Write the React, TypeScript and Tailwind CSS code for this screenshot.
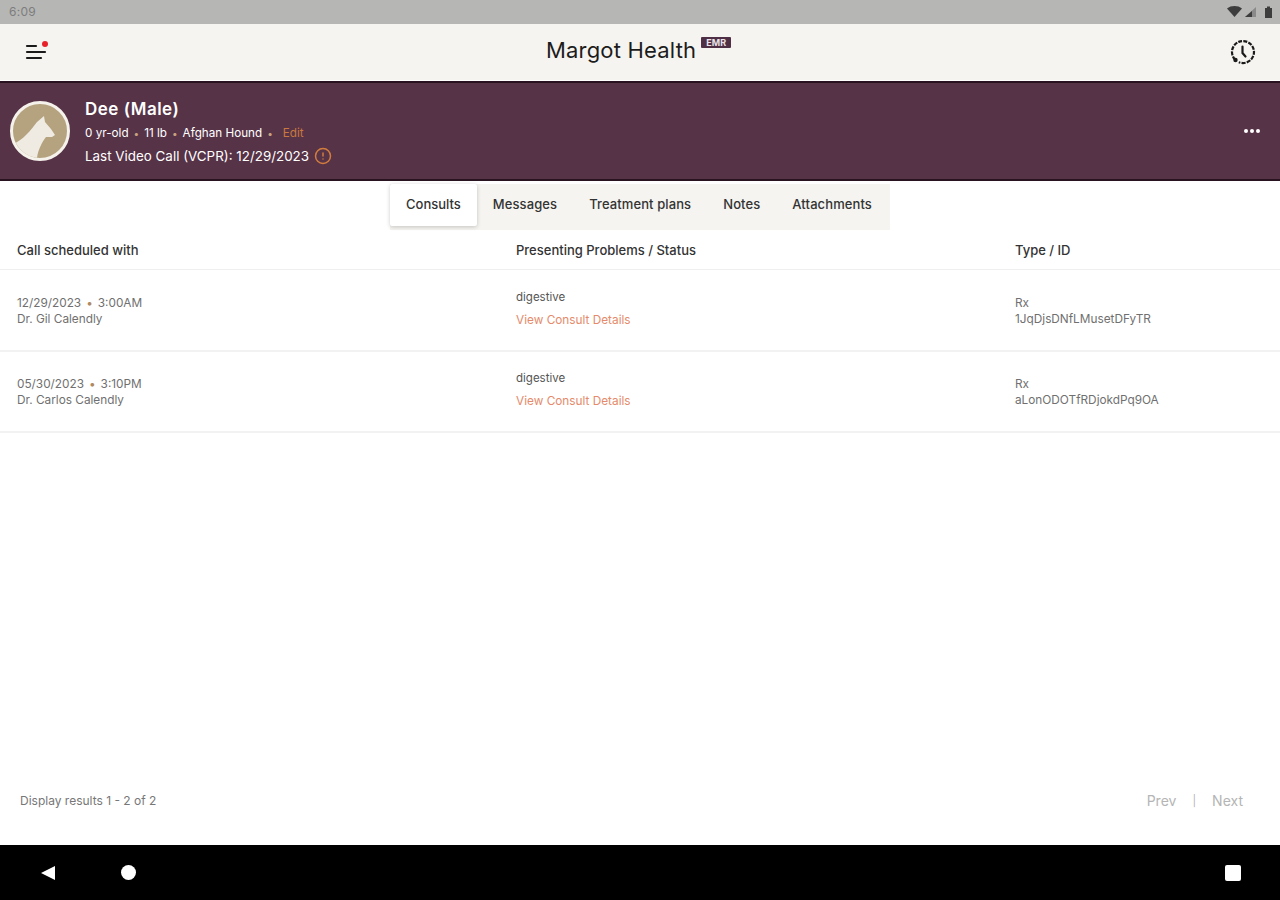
import React from 'react';
import { Info } from 'lucide-react';

const font = "font-['Inter','Liberation_Sans',sans-serif]";

const tabs = ['Consults', 'Messages', 'Treatment plans', 'Notes', 'Attachments'];

const consults = [
  { date: '12/29/2023', time: '3:00AM', doctor: 'Dr. Gil Calendly', id: '1JqDjsDNfLMusetDFyTR' },
  { date: '05/30/2023', time: '3:10PM', doctor: 'Dr. Carlos Calendly', id: 'aLonODOTfRDjokdPq9OA' },
];

const Dot = () => <span className="mx-[5px] text-[10px] leading-none text-[#c9a27e]">•</span>;

const StatusIcons = () => (
  <svg width="46" height="12" viewBox="0 0 46 12" fill="#3d3d3d">
    <path d="M0 2.5C4-.8 11-.8 15 2.5L7.5 11z" />
    <path d="M29 1v10H18z" fill="#8a8a8a" />
    <path d="M25 5v6h-7z" />
    <path d="M38 2h2V.5h3V2h2v10h-7z" />
  </svg>
);

const MenuIcon = () => (
  <div className="relative h-[20px] w-[24px]">
    <svg width="24" height="20" viewBox="0 0 24 20" fill="none" stroke="#1a1a1a" strokeWidth="2.2" strokeLinecap="round">
      <path d="M3 4h9" />
      <path d="M3 10h18" />
      <path d="M3 16h14" />
    </svg>
    <span className="absolute right-[0px] top-[-1px] h-[6px] w-[6px] rounded-full bg-[#e8202a]" />
  </div>
);

const HistoryIcon = () => (
  <svg width="26" height="26" viewBox="0 0 26 26" fill="none" stroke="#1a1a1a" strokeWidth="2.2">
    <path d="M5.2 20.8A11 11 0 1 1 8.8 23.2" strokeDasharray="4 1.2" />
    <path d="M12.5 7.5v6.5l3 3.5" strokeLinecap="round" />
    <circle cx="5.5" cy="21" r="2.2" fill="#1a1a1a" stroke="none" />
  </svg>
);

const DogAvatar = () => (
  <div className="h-[60px] w-[60px] shrink-0 overflow-hidden rounded-full border-[3px] border-[#f5f2ec] bg-[#b5a27f]">
    <svg width="54" height="54" viewBox="0 0 54 54">
      <path d="M0 40 C10 36 18 26 24 18 L31 12 L32 18 L38 25 L42 31 L39 33 L33 33 C29 38 25 46 24 54 L0 54 Z" fill="#efebe2" />
    </svg>
  </div>
);

export default function App() {
  return (
    <div className={`flex h-[900px] w-[1280px] flex-col overflow-hidden bg-white ${font}`}>
      {/* status bar */}
      <div className="flex h-[24px] items-center justify-between bg-[#b6b6b4] pl-[9px] pr-[7px]">
        <span className="text-[12px] tracking-[0.3px] text-[#7d7d7d]">6:09</span>
        <StatusIcons />
      </div>

      {/* app header */}
      <div className="flex h-[56px] items-center justify-between bg-[#f6f4f0] pl-[24px] pr-[24px]">
        <MenuIcon />
        <div className="-ml-[1px] -mt-[4px] flex items-start">
          <span className="text-[22px] leading-none tracking-[0.2px] text-[#1c1c1c]">Margot Health</span>
          <span className="ml-[5px] mt-[-2px] rounded-[1px] bg-[#4f2f46] px-[5px] text-[9px] font-bold leading-[11px] text-[#e9e2e6]">EMR</span>
        </div>
        <HistoryIcon />
      </div>

      {/* patient banner */}
      <div className="mt-[1px] flex h-[100px] items-center border-y-2 border-[#2a1320] bg-[#573347] pl-[10px] pr-[20px]">
        <DogAvatar />
        <div className="ml-[15px] flex flex-1 flex-col text-white">
          <span className="text-[17px] font-semibold leading-[22px] tracking-[0.5px]">Dee (Male)</span>
          <div className="mt-[5px] flex items-center text-[11.7px] leading-[16px]">
            <span>0 yr-old</span>
            <Dot />
            <span>11 lb</span>
            <Dot />
            <span>Afghan Hound</span>
            <Dot />
            <span className="ml-[5px] text-[#c9793f]">Edit</span>
          </div>
          <div className="mt-[6px] flex items-center text-[13.4px] leading-[18px]">
            <span>Last Video Call (VCPR): 12/29/2023</span>
            <Info size={18} className="ml-[5px] rotate-180 text-[#d27d3e]" />
          </div>
        </div>
        <div className="flex gap-[2px]">
          <span className="h-[4px] w-[4px] rounded-full bg-white" />
          <span className="h-[4px] w-[4px] rounded-full bg-white" />
          <span className="h-[4px] w-[4px] rounded-full bg-white" />
        </div>
      </div>

      {/* tabs */}
      <div className="mt-[3px] flex justify-center">
        <div className="flex h-[46px] w-[500px] bg-[#f5f4f0]">
          {tabs.map((t, i) => (
            <div
              key={t}
              className={
                i === 0
                  ? 'flex h-[42px] items-center rounded-[2px] bg-white px-[16px] text-[13px] font-medium text-[#333] shadow-[0_1px_4px_rgba(0,0,0,0.2)]'
                  : 'flex h-[42px] items-center px-[16px] text-[13px] font-medium tracking-[0.1px] text-[#333]'
              }
            >
              {t}
            </div>
          ))}
        </div>
      </div>

      {/* table */}
      <div className="grid h-[40px] grid-cols-[499px_499px_1fr] items-center border-b border-[#efefef] pl-[17px] pt-[3px] text-[13px] font-medium text-[#333]">
        <span>Call scheduled with</span>
        <span>Presenting Problems / Status</span>
        <span>Type / ID</span>
      </div>
      {consults.map((c, i) => (
        <div
          key={c.id}
          className={`grid grid-cols-[499px_499px_1fr] items-center border-b-2 border-[#f2f2f2] pl-[17px] text-[11.8px] leading-[16px] text-[#707070] ${i === 0 ? 'h-[82px]' : 'h-[81px]'}`}
        >
          <div className="pt-[1px]">
            <div>
              {c.date}
              <span className="mx-[5px] text-[#b08a5e]">•</span>
              {c.time}
            </div>
            <div>{c.doctor}</div>
          </div>
          <div className="pb-[4px]">
            <div className="mb-[7px] text-[11.5px] text-[#555]">digestive</div>
            <div className="text-[#e58a6a]">View Consult Details</div>
          </div>
          <div className="pt-[1px]">
            <div>Rx</div>
            <div>{c.id}</div>
          </div>
        </div>
      ))}

      {/* pagination */}
      <div className="mt-auto flex h-[53px] items-start justify-between pl-[20px] pr-[37px] text-[12px] text-[#777]">
        <span>Display results 1 - 2 of 2</span>
        <div className="flex items-center text-[14px] leading-[18px] text-[#b5b5b5]">
          <span>Prev</span>
          <span className="mx-[16px] text-[11px]">|</span>
          <span>Next</span>
        </div>
      </div>

      {/* android nav */}
      <div className="flex h-[55px] items-center justify-between bg-black pl-[40px] pr-[39px]">
        <div className="flex items-center gap-[65px]">
          <svg width="16" height="16" viewBox="0 0 16 16" fill="#fff">
            <path d="M15 1v14L1 8z" />
          </svg>
          <span className="h-[15px] w-[15px] rounded-full bg-white" />
        </div>
        <span className="h-[16px] w-[16px] rounded-[2px] bg-white" />
      </div>
    </div>
  );
}
